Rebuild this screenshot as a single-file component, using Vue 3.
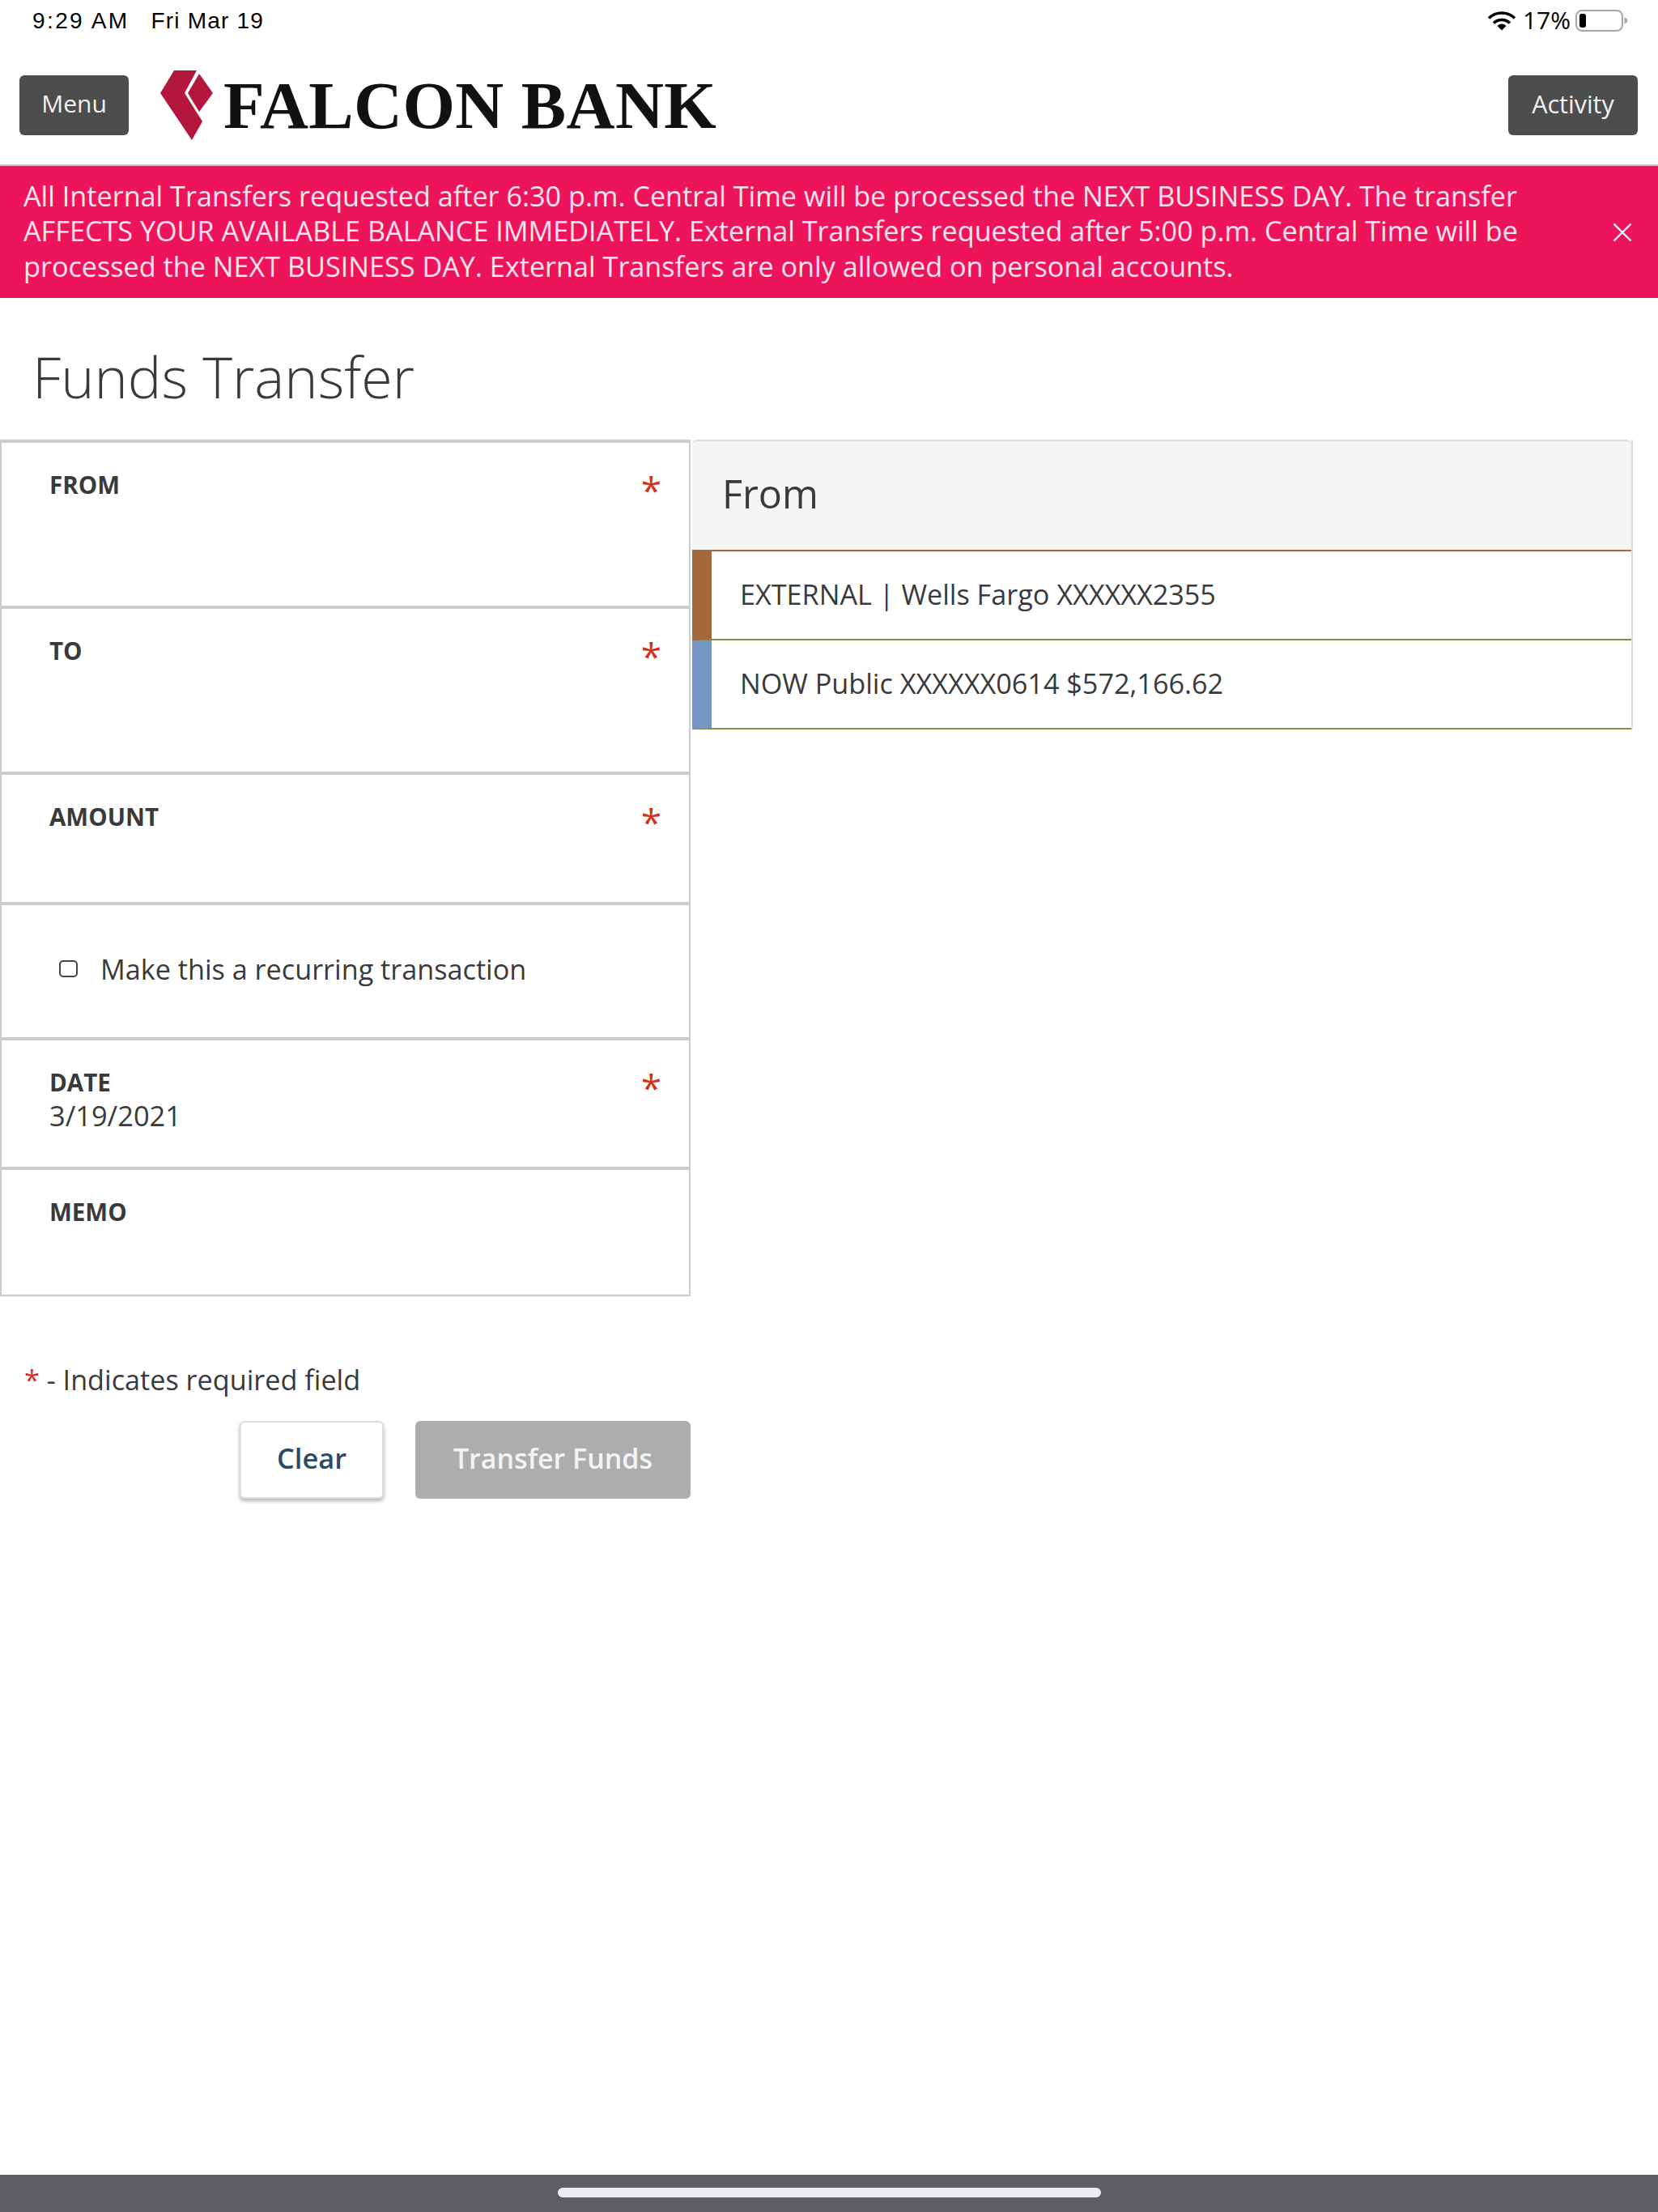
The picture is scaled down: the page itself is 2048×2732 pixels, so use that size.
<script setup>
const fields = [
  { label: "FROM", required: true, kind: "from" },
  { label: "TO", required: true, kind: "to" },
  { label: "AMOUNT", required: true, kind: "amount" },
  { kind: "recurring" },
  { label: "DATE", required: true, kind: "date", value: "3/19/2021" },
  { label: "MEMO", required: false, kind: "memo" }
];

const accounts = [
  { id: 1, text: "EXTERNAL | Wells Fargo XXXXXX2355", color: "#a5683a" },
  { id: 2, text: "NOW Public XXXXXX0614 $572,166.62", color: "#7595c4" }
];
</script>

<template>
  <div class="page">
    <div class="status-bar">
      <div class="clock">
        <span class="time">9:29 AM</span>
        <span>Fri Mar 19</span>
      </div>
      <div class="status-right">
        <svg class="wifi" width="36" height="24" viewBox="0 0 36 24">
          <path d="M2 8.5a23 23 0 0 1 32 0" fill="none" stroke="#000" stroke-width="3.6" />
          <path d="M8 14.5a14.5 14.5 0 0 1 20 0" fill="none" stroke="#000" stroke-width="3.6" />
          <path d="M12.5 18a7.5 7.5 0 0 1 11 0L18 23.5z" fill="#000" />
        </svg>
        <span class="percent">17%</span>
        <svg class="battery" width="65" height="28" viewBox="0 0 65 28">
          <rect x="1" y="1" width="57" height="25" rx="7" fill="none" stroke="#a8a8a8" stroke-width="2" />
          <rect x="5" y="5" width="8" height="17" rx="3" fill="#000" />
          <path d="M60.500 9.500c2.500 .8 4 2.200 4 4s-1.500 3.200-4 4z" fill="#a8a8a8" />
        </svg>
      </div>
    </div>

    <header class="top-nav">
      <button class="nav-btn menu-btn">Menu</button>
      <div class="logo">
        <svg width="66" height="88" viewBox="18 16 66 88">
          <path d="M35 17H63L48 45L70 80L57 103L18 45Z" fill="#b5173c" />
          <path d="M66 21L83 45L66 68L52 45Z" fill="#b5173c" />
        </svg>
        <span class="logo-text">FALCON BANK</span>
      </div>
      <button class="nav-btn activity-btn">Activity</button>
    </header>

    <div class="alert">
      <p>
        All Internal Transfers requested after 6:30 p.m. Central Time will be processed the NEXT BUSINESS DAY. The transfer
        AFFECTS YOUR AVAILABLE BALANCE IMMEDIATELY. External Transfers requested after 5:00 p.m. Central Time will be
        processed the NEXT BUSINESS DAY. External Transfers are only allowed on personal accounts.
      </p>
      <svg class="alert-close" width="24" height="24" viewBox="0 0 24 24">
        <path d="M1.500 1.500L22.500 22.500M22.500 1.500L1.500 22.500" stroke="#fff" stroke-width="2.400" fill="none" />
      </svg>
    </div>

    <h1 class="title">Funds Transfer</h1>

    <main class="content">
      <section class="form-col">
        <div class="fields">
          <div v-for="field in fields" :key="field.kind" :class="['field', field.kind]">
            <template v-if="field.kind === 'recurring'">
              <label class="recurring-row">
                <span class="checkbox"></span>
                Make this a recurring transaction
              </label>
            </template>
            <template v-else>
              <div class="field-top">
                <span class="field-label">{{ field.label }}</span>
                <span v-if="field.required" class="star">*</span>
              </div>
              <div v-if="field.value" class="field-value">{{ field.value }}</div>
            </template>
          </div>
        </div>

        <p class="legend"><span class="legend-star">*</span> - Indicates required field</p>

        <div class="actions">
          <button class="btn-clear">Clear</button>
          <button class="btn-transfer">Transfer Funds</button>
        </div>
      </section>

      <section class="picker">
        <div class="picker-head">From</div>
        <div
          v-for="account in accounts"
          :key="account.id"
          class="picker-row"
          :style="{ borderLeftColor: account.color }"
        >
          {{ account.text }}
        </div>
      </section>
    </main>

    <footer class="home-bar">
      <div class="home-pill"></div>
    </footer>
  </div>
</template>

<style>
html,
body {
  margin: 0;
  background: #fff;
}
</style>

<style scoped>
.page {
  width: 2048px;
  height: 2732px;
  display: flex;
  flex-direction: column;
  background: #fff;
  color: #3a3a3a;
  font-family: "Open Sans", sans-serif;
  overflow: hidden;
}

.status-bar {
  height: 52px;
  display: flex;
  justify-content: space-between;
  align-items: center;
  padding: 0 37px 0 40px;
  color: #000;
  font-family: "Liberation Sans", sans-serif;
  font-size: 28px;
}

.clock {
  display: flex;
  gap: 27px;
  letter-spacing: 1.2px;
}

.time {
  letter-spacing: 2.4px;
}

.status-right {
  display: flex;
  align-items: center;
}

.wifi {
  margin-right: 8px;
}

.percent {
  font-family: "Open Sans", sans-serif;
  font-size: 30px;
  line-height: 36px;
  margin: -2px 6px 0 0;
}

.top-nav {
  height: 153px;
  box-sizing: border-box;
  display: flex;
  align-items: flex-start;
  padding: 41px 25px 0 24px;
  border-bottom: 2px solid #e7b9c8;
}

.nav-btn {
  height: 74px;
  border: 0;
  border-radius: 6px;
  background: #4d4d4d;
  color: #f0f0f0;
  font-family: "Open Sans", sans-serif;
  font-size: 30px;
  padding: 0 0 5px;
}

.menu-btn {
  width: 135px;
}

.activity-btn {
  width: 160px;
  margin-left: auto;
  font-size: 30.5px;
}

.logo {
  display: flex;
  align-items: center;
  margin: -7px 0 0 39px;
}

.logo-text {
  margin-left: 12px;
  color: #111;
  font-family: "Liberation Serif", serif;
  font-weight: 700;
  font-size: 83px;
  line-height: 88px;
  letter-spacing: 0.4px;
  white-space: nowrap;
}

.alert {
  height: 163px;
  box-sizing: border-box;
  display: flex;
  align-items: center;
  justify-content: space-between;
  padding: 0 32px 0 29px;
  background: #ee145b;
  color: #fde4ec;
}

.alert p {
  margin: -3px 0 0;
  width: 1900px;
  font-size: 34.2px;
  line-height: 43.6px;
}

.title {
  margin: 0;
  padding: 57px 0 0 40px;
  height: 118px;
  font-size: 70px;
  line-height: 80px;
  font-weight: 300;
  color: #3a3a3a;
}

.content {
  flex: 1;
  display: grid;
  grid-template-columns: 853px 1162px;
  column-gap: 2px;
  align-items: start;
}

.fields {
  border-left: 2px solid #ccc;
  border-right: 2px solid #ccc;
  border-bottom: 2px solid #ccc;
}

.field {
  box-sizing: border-box;
  border-top: 4px solid #ccc;
  padding: 32px 34px 0 59px;
}

.from,
.to {
  height: 205px;
}

.amount {
  height: 161px;
}

.recurring {
  height: 167px;
  padding: 0 0 6px 71px;
}

.date {
  height: 160px;
}

.memo {
  height: 158px;
}

.field-top {
  display: flex;
  justify-content: space-between;
  height: 40px;
}

.field-label {
  font-size: 29.5px;
  line-height: 40px;
  font-weight: 700;
  color: #3a3a3a;
}

.star {
  color: #d0321e;
  font-size: 46px;
  line-height: 52px;
}

.field-value {
  margin-top: 1px;
  font-size: 34.4px;
  line-height: 40px;
}

.recurring-row {
  height: 100%;
  display: flex;
  align-items: center;
  gap: 28px;
  font-size: 34.2px;
}

.checkbox {
  box-sizing: border-box;
  width: 23px;
  height: 21px;
  border: 2px solid #444;
  border-radius: 5px;
}

.legend {
  margin: 80px 0 0 30px;
  font-size: 34.2px;
  line-height: 46px;
}

.legend-star {
  color: #d0321e;
}

.actions {
  margin-top: 28px;
  display: flex;
  justify-content: flex-end;
  gap: 39px;
}

.btn-clear {
  box-sizing: border-box;
  width: 178px;
  height: 96px;
  padding: 0 0 5px;
  background: #fff;
  border: 2px solid #ddd;
  border-radius: 6px;
  box-shadow: 0 3px 5px rgba(0, 0, 0, 0.3);
  color: #2c4a63;
  font-family: "Open Sans", sans-serif;
  font-size: 34.4px;
  font-weight: 600;
}

.btn-transfer {
  width: 340px;
  height: 96px;
  padding: 0 0 4px;
  background: #adadad;
  border: 0;
  border-radius: 6px;
  color: #f4f4f4;
  font-family: "Open Sans", sans-serif;
  font-size: 34px;
  font-weight: 600;
}

.picker {
  border-right: 2px solid #ddd;
}

.picker-head {
  height: 138px;
  box-sizing: border-box;
  padding: 0 0 6px 37px;
  background: #f5f5f5;
  border-top: 2px solid #ddd;
  border-bottom: 2px solid #a5683a;
  border-radius: 6px 6px 0 0;
  display: flex;
  align-items: center;
  font-size: 48.500px;
  color: #3a3a3a;
}

.picker-row {
  height: 110px;
  box-sizing: border-box;
  display: flex;
  align-items: center;
  padding: 0 0 3px 35px;
  border-left: 24px solid;
  border-bottom: 2px solid #8a8a4a;
  font-size: 34.2px;
  color: #3a3a3a;
}

.home-bar {
  height: 46px;
  flex-shrink: 0;
  background: #5c5e62;
  display: flex;
  justify-content: center;
  padding-top: 16px;
  box-sizing: border-box;
}

.home-pill {
  width: 671px;
  height: 12px;
  border-radius: 6px;
  background: #ecebed;
}
</style>
